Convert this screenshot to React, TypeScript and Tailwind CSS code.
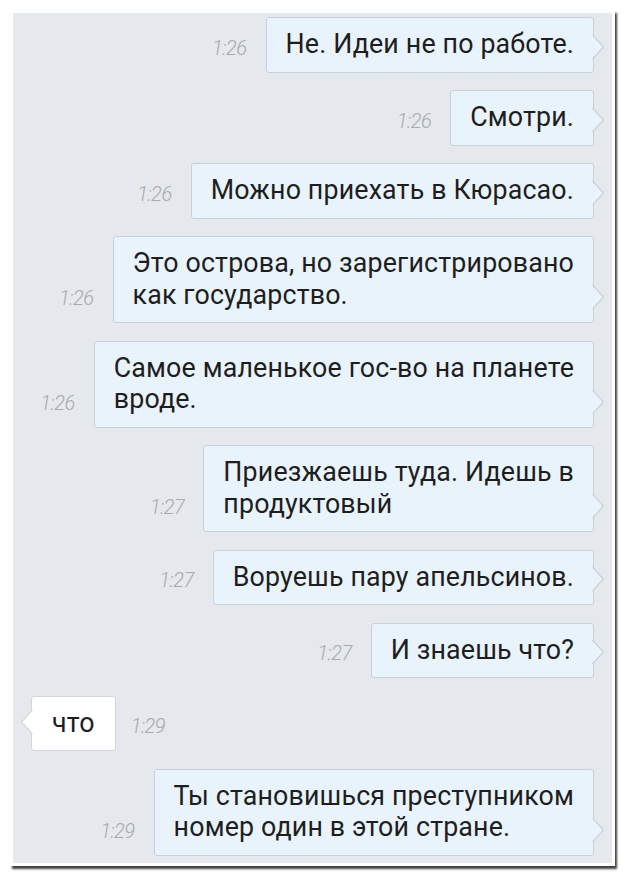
import React from "react";

type Msg = { out: boolean; lines: string[]; time: string; mt: string };

const msgs: Msg[] = [
  { out: true, lines: ["Не. Идеи не по работе."], time: "1:26", mt: "mt-[4px]" },
  { out: true, lines: ["Смотри."], time: "1:26", mt: "mt-[17.5px]" },
  { out: true, lines: ["Можно приехать в Кюрасао."], time: "1:26", mt: "mt-[17.5px]" },
  { out: true, lines: ["Это острова, но зарегистрировано", "как государство."], time: "1:26", mt: "mt-[17.5px]" },
  { out: true, lines: ["Самое маленькое гос-во на планете", "вроде."], time: "1:26", mt: "mt-[17.5px]" },
  { out: true, lines: ["Приезжаешь туда. Идешь в", "продуктовый"], time: "1:27", mt: "mt-[17.5px]" },
  { out: true, lines: ["Воруешь пару апельсинов."], time: "1:27", mt: "mt-[17.5px]" },
  { out: true, lines: ["И знаешь что?"], time: "1:27", mt: "mt-[17.5px]" },
  { out: false, lines: ["что"], time: "1:29", mt: "mt-[17.5px]" },
  { out: true, lines: ["Ты становишься преступником", "номер один в этой стране."], time: "1:29", mt: "mt-[17.5px]" },
];

function Tail({ out }: { out: boolean }) {
  const fill = out ? "#e9f3fb" : "#ffffff";
  return out ? (
    <svg
      className="absolute left-[calc(100%-1px)] bottom-[13px]"
      width="13"
      height="24"
      viewBox="0 0 13 24"
    >
      <polygon points="0,0 11.5,12 0,24" fill={fill} />
      <polyline points="0.5,0 11.5,12 0.5,24" fill="none" stroke="#c9d0d8" strokeWidth="1.2" />
    </svg>
  ) : (
    <svg
      className="absolute right-[calc(100%-1px)] bottom-[16px]"
      width="13"
      height="24"
      viewBox="0 0 13 24"
    >
      <polygon points="13,0 1.5,12 13,24" fill={fill} />
      <polyline points="12.5,0 1.5,12 12.5,24" fill="none" stroke="#d3d7dc" strokeWidth="1.2" />
    </svg>
  );
}

function Time({ t }: { t: string }) {
  return (
    <span className="mb-[13px] text-[20px] leading-[24px] italic font-light text-[#a6aaaf] tracking-[-0.5px]">
      {t}
    </span>
  );
}

function Row({ m }: { m: Msg }) {
  const bubble = (
    <div
      className={
        m.out
          ? "relative rounded-[3px] border border-[#c9d0d8] bg-[#e9f3fb] px-[19px] py-[11px] text-[26.8px] leading-[31.5px] text-[#1e1e1e]"
          : "relative rounded-[3px] border border-[#d3d7dc] bg-white px-[20px] py-[11px] text-[26.8px] leading-[31.5px] text-[#1e1e1e]"
      }
    >
      {m.lines.map((l, i) => (
        <div key={i} className="whitespace-nowrap tracking-[0.15px]">
          {l}
        </div>
      ))}
      <Tail out={m.out} />
    </div>
  );
  return m.out ? (
    <div className={`flex items-end justify-end gap-[19px] pr-[18px] ${m.mt}`}>
      <Time t={m.time} />
      {bubble}
    </div>
  ) : (
    <div className={`flex items-end justify-start gap-[15px] pl-[18px] ${m.mt}`}>
      {bubble}
      <Time t={m.time} />
    </div>
  );
}

export default function App() {
  return (
    <div
      className="w-[625px] h-[876px] bg-white pt-[10px] pl-[10px]"
      style={{ fontFamily: "Roboto, 'Noto Sans', sans-serif" }}
    >
      <div className="w-[605px] h-[856px] border-[3px] border-white bg-[#e5e8ec] shadow-[2px_3px_2px_rgba(0,0,0,0.75)] overflow-hidden">
        {msgs.map((m, i) => (
          <Row key={i} m={m} />
        ))}
      </div>
    </div>
  );
}
